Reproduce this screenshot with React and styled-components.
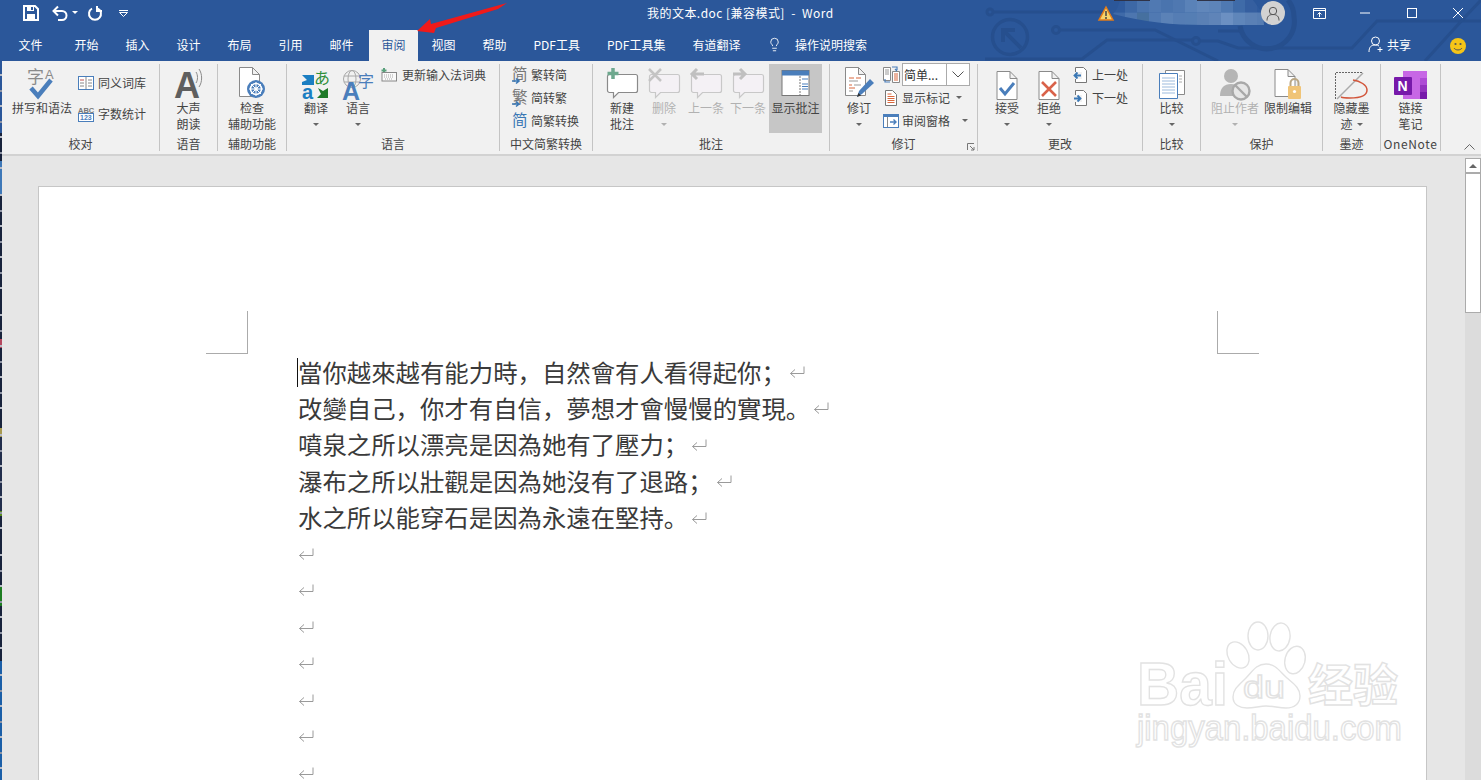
import React from 'react';
import styled, { createGlobalStyle } from 'styled-components';
import { Lightbulb } from 'lucide-react';

const cjk = '"Noto Sans CJK SC", "Liberation Sans", sans-serif';
const blue = '#2b579a';
const iconBlue = '#4a7ebb';

const GlobalStyle = createGlobalStyle`
    html, body {
        margin: 0;
        padding: 0;
        background: #e6e6e6;
    }
    body {
        font-family: ${cjk};
    }
    svg {
        overflow: visible;
    }
`;

const SWindow = styled.div`
    width: 1481px;
    height: 780px;
    display: flex;
    flex-direction: column;
    overflow: hidden;
`;

const SHeader = styled.div`
    position: relative;
    flex: none;
    height: 61px;
    background: ${blue};
    color: #fff;
    font-size: 12px;
`;

const SCircuit = styled.svg`
    position: absolute;
    right: 0;
    top: 0;
    overflow: hidden;
`;

const SArrow = styled.svg`
    position: absolute;
    left: 410px;
    top: 0;
    z-index: 3;
`;

const STitleBar = styled.div`
    position: relative;
    box-sizing: border-box;
    height: 30px;
    padding-bottom: 4px;
    display: flex;
    align-items: center;
`;

const SQuick = styled.div`
    display: flex;
    align-items: center;
    width: 647px;
    flex: none;
`;

const SQuickItem = styled.div`
    display: flex;
    margin-left: ${(p) => p.$ml}px;
`;

const STitle = styled.div`
    font-size: 12px;
    white-space: pre;
    letter-spacing: 0.46px;
    padding-bottom: 2px;
`;

const SStatus = styled.div`
    margin-left: auto;
    display: flex;
    align-items: center;
`;

const SWarning = styled.svg`
    margin-right: -1px;
`;

const SMosaic = styled.svg`
    margin: 0 -4px 2px 0;
`;

const SAvatar = styled.div`
    position: relative;
    width: 24px;
    height: 24px;
    border-radius: 50%;
    background: #d2d2d2;
    margin-right: 11px;
    display: flex;
    align-items: center;
    justify-content: center;
`;

const SWinBtn = styled.div`
    width: 46.25px;
    height: 26px;
    display: flex;
    align-items: center;
    justify-content: center;
`;

const STabs = styled.div`
    position: relative;
    height: 31px;
    display: flex;
    align-items: stretch;
`;

const STab = styled.div`
    box-sizing: border-box;
    display: flex;
    align-items: center;
    justify-content: center;
    padding-bottom: 3px;
    padding-left: ${(p) => (p.$w ? '0' : '13.5px')};
    padding-right: ${(p) => (p.$w ? '0' : '13.5px')};
    width: ${(p) => (p.$w ? `${p.$w}px` : 'auto')};
    white-space: nowrap;
    background: ${(p) => (p.$active ? '#f1f1f1' : 'transparent')};
    color: ${(p) => (p.$active ? blue : '#fff')};
    margin-left: ${(p) => (p.$active ? '2px' : '0')};
`;

const STellMe = styled.div`
    display: flex;
    align-items: center;
    margin-left: 13px;
    padding-bottom: 3px;
    gap: 13px;
`;

const SShare = styled.div`
    margin-left: auto;
    display: flex;
    align-items: center;
    gap: 3px;
    margin-right: 17px;
    padding-bottom: 2px;
`;

const SSmiley = styled.svg`
    margin: 0 15px 0 22px;
    align-self: center;
`;

const SMain = styled.div`
    flex: 1;
    min-height: 0;
    display: flex;
`;

const SStrip = styled.div`
    flex: none;
    width: 2px;
    background:
        repeating-linear-gradient(to bottom, transparent 0, transparent 13px, #b8bcc6 13px, #b8bcc6 15px, transparent 15px, transparent 29px, #8e94a4 29px, #8e94a4 31px),
        linear-gradient(
            to bottom,
            #2b579a 0, #2b579a 72px,
            #18233c 72px, #18233c 100px,
            #3e78b8 100px, #3e78b8 135px,
            #18233c 135px, #18233c 278px,
            #b5485f 278px, #b5485f 287px,
            #18233c 287px, #18233c 367px,
            #a89a50 367px, #a89a50 376px,
            #222e4c 376px, #222e4c 450px,
            #5a8c20 450px, #5a8c20 455px,
            #18233c 455px, #18233c 525px,
            #1e7d22 525px, #1e7d22 545px,
            #18233c 545px, #18233c 600px,
            #1b5fa8 600px
        );
    background-size: 100% 120px, 100% 100%;
    background-repeat: repeat-y, no-repeat;
`;

const SContent = styled.div`
    flex: 1;
    min-width: 0;
    display: flex;
    flex-direction: column;
`;

const SRibbon = styled.div`
    position: relative;
    flex: none;
    height: 95px;
    box-sizing: border-box;
    padding-top: 3px;
    background: #f1f1f1;
    border-bottom: 2px solid #d2d2d2;
    display: flex;
    align-items: flex-start;
    color: #444;
    font-size: 12px;
`;

const SGroup = styled.div`
    flex: none;
    box-sizing: border-box;
    width: ${(p) => p.$w}px;
    height: 87px;
    border-right: 1.5px solid #c4c4c4;
    display: flex;
    flex-direction: column;
`;

const SGroupBody = styled.div`
    height: 73px;
    display: flex;
    padding-left: ${(p) => p.$pl || 0}px;
    gap: ${(p) => p.$gap || 0}px;
    justify-content: ${(p) => (p.$center ? 'center' : 'flex-start')};
`;

const SGroupLabel = styled.div`
    text-align: center;
    line-height: 14px;
    white-space: nowrap;
    letter-spacing: ${(p) => p.$ls || 0}px;
`;

const SBig = styled.div`
    flex: none;
    width: ${(p) => p.$w}px;
    height: 69px;
    display: flex;
    flex-direction: column;
    align-items: center;
    background: ${(p) => (p.$active ? '#c6c6c6' : 'transparent')};
    color: ${(p) => (p.$off ? '#b1b1b1' : '#444')};
`;

const SBigIcon = styled.div`
    height: 36px;
    width: 100%;
    display: flex;
    justify-content: center;
    align-items: flex-end;
`;

const SBigLine = styled.div`
    height: 16px;
    line-height: 16px;
    white-space: nowrap;
    display: flex;
    align-items: center;
    gap: 4px;
`;

const SCaret = styled.span`
    display: inline-block;
    flex: none;
    width: 0;
    height: 0;
    border-left: 3.5px solid transparent;
    border-right: 3.5px solid transparent;
    border-top: 3.5px solid ${(p) => (p.$off ? '#b1b1b1' : '#666')};
`;

const SStack = styled.div`
    flex: none;
    display: flex;
    flex-direction: column;
    margin-top: -1px;
    margin-left: ${(p) => p.$ml || 0}px;
    padding-top: ${(p) => p.$pt || 0}px;
    gap: ${(p) => p.$gap || 0}px;
`;

const SSmall = styled.div`
    height: 23px;
    display: flex;
    align-items: center;
    gap: ${(p) => p.$gap ?? 3}px;
    white-space: nowrap;
`;

const SSmallCaret = styled.span`
    display: flex;
    margin-left: ${(p) => p.$ml}px;
`;

const SSelect = styled.div`
    box-sizing: border-box;
    width: 68px;
    height: 23px;
    background: #fff;
    border: 1px solid #ababab;
    display: flex;
    align-items: center;
    padding-left: 1px;
    color: #333;
`;

const SSelectValue = styled.div`
    flex: 1;
`;

const SSelectBtn = styled.div`
    width: 22px;
    height: 100%;
    border-left: 1px solid #ababab;
    display: flex;
    align-items: center;
    justify-content: center;
`;

const SLauncher = styled.svg`
    position: absolute;
    left: 965px;
    top: 82px;
`;

const SCollapse = styled.svg`
    position: absolute;
    right: 6px;
    top: 83px;
`;

const SWorkspace = styled.div`
    flex: 1;
    min-height: 0;
    display: flex;
    background: #e6e6e6;
`;

const SDocArea = styled.div`
    flex: 1;
    min-width: 0;
    box-sizing: border-box;
    padding: 30px 38px 0 36px;
    display: flex;
`;

const SPage = styled.div`
    position: relative;
    flex: 1;
    min-width: 0;
    box-sizing: border-box;
    background: #fff;
    border: 1px solid #c6c6c6;
    border-bottom: none;
    padding-top: 124px;
    overflow: hidden;
`;

const SMarks = styled.div`
    display: flex;
    justify-content: space-between;
    padding: 0 167px;
`;

const SCorner = styled.div`
    width: 41px;
    height: 42px;
    border-bottom: 1px solid #ababab;
    border-left: ${(p) => (p.$right ? '1px solid #ababab' : 'none')};
    border-right: ${(p) => (p.$right ? 'none' : '1px solid #ababab')};
`;

const SBody = styled.div`
    margin-top: -0.4px;
    padding-left: 259px;
    color: #3a3a3a;
    font-size: 24.4px;
    white-space: nowrap;
`;

const SParagraph = styled.div`
    position: relative;
    height: 36.45px;
    line-height: 36.45px;
    display: flex;
    align-items: center;
    gap: 3px;
`;

const SCursor = styled.span`
    position: absolute;
    left: -1px;
    top: 4px;
    width: 1px;
    height: 29px;
    background: #111;
`;

const SWatermark = styled.svg`
    position: absolute;
    left: 1098px;
    top: 436px;
`;

const SScrollbar = styled.div`
    flex: none;
    width: 16px;
    margin-top: 2px;
    display: flex;
    flex-direction: column;
    background: #dcdcdc;
`;

const SScrollBtn = styled.div`
    box-sizing: border-box;
    height: 15px;
    background: #fff;
    border: 1px solid #ababab;
    display: flex;
    align-items: center;
    justify-content: center;
`;

const SScrollUp = styled.span`
    width: 0;
    height: 0;
    border-left: 4px solid transparent;
    border-right: 4px solid transparent;
    border-bottom: 4px solid #666;
`;

const SThumb = styled.div`
    box-sizing: border-box;
    height: 140px;
    background: #fff;
    border: 1px solid #ababab;
`;

const Big = ({ w, icon, lines, caret, off, active }) => (
    <SBig $w={w} $off={off} $active={active}>
        <SBigIcon>{icon}</SBigIcon>
        {lines.map((line, i) => (
            <SBigLine key={i}>{line}</SBigLine>
        ))}
        {caret && (
            <SBigLine>
                <SCaret $off={off} />
            </SBigLine>
        )}
    </SBig>
);

const Doc = ({ x = 0.5, y = 0.5, w = 20, h = 28, fold = 7, stroke = '#8a8a8a' }) => (
    <path
        d={`M${x} ${y}h${w - fold}l${fold} ${fold}v${h - fold}h-${w}zM${x + w - fold} ${y}v${fold}h${fold}`}
        fill="#fff"
        stroke={stroke}
        strokeWidth="1"
    />
);

const Bubble = ({ off }) => (
    <path
        d="M3.5 6.5h26a2 2 0 0 1 2 2v14a2 2 0 0 1-2 2h-17l-5 5v-5h-4a2 2 0 0 1-2-2v-14a2 2 0 0 1 2-2z"
        fill={off ? '#f4f1f5' : '#fff'}
        stroke={off ? '#c8c8c8' : '#8a8a8a'}
        strokeWidth="1.2"
    />
);

const SpellIcon = () => (
    <svg width="30" height="34" viewBox="0 0 30 34">
        <text x="0" y="17" fontSize="17" fill="#8a8a8a">字</text>
        <text x="18" y="13" fontSize="13" fill="#8a8a8a" fontFamily="Liberation Sans">A</text>
        <path d="M4 22l7 8L24 14" fill="none" stroke={iconBlue} strokeWidth="4.5" />
    </svg>
);

const BookIcon = () => (
    <svg width="16" height="14" viewBox="0 0 16 14">
        <rect x="0.5" y="0.5" width="15" height="13" fill="#fff" stroke={iconBlue} />
        <path d="M8 1v12" stroke="#888" />
        <path d="M2 4h4" stroke="#c0504d" />
        <path d="M2 7h4M2 10h4M10 4h4M10 7h4M10 10h4" stroke="#888" />
    </svg>
);

const CountIcon = () => (
    <svg width="16" height="16" viewBox="0 0 16 16">
        <text x="0" y="6.5" fontSize="7.5" fontWeight="700" fill="#777" fontFamily="Liberation Sans">ABC</text>
        <rect x="0.5" y="7.5" width="15" height="8" fill="#fff" stroke={iconBlue} />
        <text x="2" y="14.3" fontSize="7" fontWeight="700" fill={iconBlue} fontFamily="Liberation Sans">123</text>
    </svg>
);

const ReadIcon = () => (
    <svg width="30" height="32" viewBox="0 0 30 32">
        <text x="0" y="30" fontSize="36" fontWeight="700" fill="#5f5f5f" fontFamily="Liberation Sans">A</text>
        <path d="M22 4c2 3 2 8 0 11M25 1c3.500 5 3.500 13 0 18" fill="none" stroke="#8a8a8a" />
    </svg>
);

const AccessIcon = () => (
    <svg width="30" height="33" viewBox="0 0 30 33">
        <Doc x={2.5} y={0.5} w={20} h={29} />
        <circle cx="19" cy="22" r="9" fill={iconBlue} />
        <circle cx="19" cy="22" r="5.5" fill="none" stroke="#fff" strokeWidth="1.5" />
        <path d="M19 15v14M12 22h14M14 17l10 10M24 17L14 27" stroke="#fff" />
        <circle cx="19" cy="22" r="1.8" fill="#fff" />
    </svg>
);

const TranslateIcon = () => (
    <svg width="28" height="30" viewBox="0 0 28 30">
        <path d="M0 5h12v10H0v-3l5-2-5-5z" fill="#1b7ec2" />
        <text x="12" y="14" fontSize="16" fill="#2f8f3a">あ</text>
        <text x="0" y="29" fontSize="20" fontWeight="700" fill="#1b7ec2" fontFamily="Liberation Sans">a</text>
        <path d="M15 28h11V18l-5 3-5-3 3 6z" fill="#1f7a28" />
    </svg>
);

const LanguageIcon = () => (
    <svg width="32" height="30" viewBox="0 0 32 30">
        <circle cx="10" cy="9" r="8.5" fill="none" stroke="#a8a8a8" />
        <ellipse cx="10" cy="9" rx="4" ry="8.5" fill="none" stroke="#a8a8a8" />
        <path d="M2 6h16M2 12h16" stroke="#a8a8a8" />
        <text x="16" y="17" fontSize="16" fill={iconBlue}>字</text>
        <text x="0" y="30" fontSize="25" fontWeight="700" fill={iconBlue} fontFamily="Liberation Sans">A</text>
    </svg>
);

const KeyboardIcon = () => (
    <svg width="16" height="14" viewBox="0 0 16 14">
        <path d="M3 0v5M0.500 2.500h5" stroke="#5aa07c" strokeWidth="2" />
        <rect x="1" y="4.5" width="14.5" height="8.5" fill="#fafafa" stroke="#888" />
        <path d="M3 7h10M3 9h10M4 11h8" stroke="#aaa" strokeDasharray="1 1" />
    </svg>
);

const ConvertIcon = ({ glyph, color = '#777', arrow = true }) => (
    <svg width="16" height="18" viewBox="0 0 16 18">
        <text x="0" y="14" fontSize="15.5" fill={color}>{glyph}</text>
        {arrow && <path d="M0 15h6M4 12.500l3 2.500-3 2.500" fill="none" stroke="#3b78b5" strokeWidth="1.6" />}
    </svg>
);

const NewCommentIcon = () => (
    <svg width="32" height="32" viewBox="0 0 32 32">
        <Bubble />
        <path d="M7 0v11M1.500 5.500h11" stroke="#6ea88e" strokeWidth="3.5" />
    </svg>
);

const DeleteCommentIcon = () => (
    <svg width="32" height="32" viewBox="0 0 32 32">
        <Bubble off />
        <path d="M1 1l12 12M13 1L1 13" stroke="#c4c4c4" strokeWidth="2.5" />
    </svg>
);

const PrevCommentIcon = () => (
    <svg width="32" height="32" viewBox="0 0 32 32">
        <Bubble off />
        <path d="M14 6H3M7 1L2 6l5 5" fill="none" stroke="#c0c0c0" strokeWidth="3" />
    </svg>
);

const NextCommentIcon = () => (
    <svg width="32" height="32" viewBox="0 0 32 32">
        <Bubble off />
        <path d="M1 6h11M8 1l5 5-5 5" fill="none" stroke="#c0c0c0" strokeWidth="3" />
    </svg>
);

const ShowCommentsIcon = () => (
    <svg width="30" height="30" viewBox="0 0 30 30">
        <rect x="1" y="0.5" width="27" height="25" fill="#fff" stroke="#777" />
        <rect x="1" y="0.5" width="27" height="5" fill={iconBlue} />
        <path d="M19 6v19" stroke="#777" strokeDasharray="2 1" />
        <path d="M21 9h6M21 14h6M21 16.500h6M21 19h6" stroke={iconBlue} strokeWidth="1.2" />
    </svg>
);

const TrackIcon = () => (
    <svg width="30" height="33" viewBox="0 0 30 33">
        <Doc x={1.5} y={0.5} w={20} h={28} />
        <path d="M5 11h5M12 11h5M5 18h3M5 21h6" stroke="#d9673c" />
        <path d="M5 14h9M10 18h7M5 24h4" stroke="#999" />
        <path d="M13 30l2-6L26 12l4 4-12 11z" fill={iconBlue} />
        <path d="M13 30l1.400-4 2.600 2.400z" fill="#333" />
    </svg>
);

const SmallCompareIcon = () => (
    <svg width="17" height="17" viewBox="0 0 17 17">
        <path d="M0.500 1.500h7v13h-7z" fill="#fff" stroke="#888" />
        <path d="M9.500 5.500h7v11h-7z" fill="#fff" stroke="#888" />
        <path d="M11 8h4M11 10h4M11 12h4M11 14h4" stroke="#d9673c" />
        <path d="M2 4h4M2 6h4M2 8h4" stroke="#999" />
        <path d="M9 1h5v3M12 3l2 2" fill="none" stroke={iconBlue} strokeWidth="1.2" />
        <path d="M7 16H2v-3" fill="none" stroke={iconBlue} strokeWidth="1.2" />
    </svg>
);

const MarkupIcon = () => (
    <svg width="16" height="16" viewBox="0 0 16 16">
        <path d="M2.500 0.500h7l4 4v11h-11z" fill="#fff" stroke="#777" />
        <path d="M4.500 4h4M4.500 6.500h7M4.500 8.500h7M4.500 10.500h7M4.500 12.500h7" stroke="#d9673c" />
    </svg>
);

const PaneIcon = () => (
    <svg width="16" height="14" viewBox="0 0 16 14">
        <rect x="0.5" y="0.5" width="15" height="13" fill="#fff" stroke={iconBlue} />
        <rect x="0" y="0" width="16" height="3" fill={iconBlue} />
        <path d="M4.500 3v10" stroke="#888" />
        <path d="M7 8h6M10.500 5.500L13 8l-2.500 2.500" fill="none" stroke={iconBlue} strokeWidth="1.4" />
    </svg>
);

const AcceptIcon = () => (
    <svg width="22" height="29" viewBox="0 0 22 29">
        <Doc x={1} y={0.5} w={20} h={28} />
        <path d="M4 17l5 6 9-11" fill="none" stroke={iconBlue} strokeWidth="3" />
    </svg>
);

const RejectIcon = () => (
    <svg width="22" height="29" viewBox="0 0 22 29">
        <Doc x={1} y={0.5} w={20} h={28} />
        <path d="M4 11l14 14M18 11L4 25" stroke="#d9624a" strokeWidth="2.6" />
    </svg>
);

const ChangeIcon = ({ next }) => (
    <svg width="16" height="16" viewBox="0 0 16 16">
        <path d="M2.500 0.500h8l3 3v12h-11z" fill="#fff" stroke="#777" />
        <rect x="0" y="5" width="9" height="7" fill="#f1f1f1" />
        {next ? (
            <path d="M1 8.500h6M4.500 5.500l3 3-3 3" fill="none" stroke="#3b78b5" strokeWidth="1.8" />
        ) : (
            <path d="M8 8.500H2M4.500 5.500l-3 3 3 3" fill="none" stroke="#3b78b5" strokeWidth="1.8" />
        )}
    </svg>
);

const CompareIcon = () => (
    <svg width="26" height="30" viewBox="0 0 26 30">
        <path d="M6.500 0.500h19v24h-19z" fill="#fff" stroke="#8a8a8a" />
        <path d="M0.500 3.500h18v25h-18z" fill="#fff" stroke={iconBlue} />
        <path d="M3 8h13M3 11h13M3 14h13M3 17h13M3 20h13M3 23h13" stroke="#9dbbdd" />
        <path d="M20 6h3M20 9h3M20 12h3" stroke="#aaa" />
    </svg>
);

const BlockIcon = () => (
    <svg width="32" height="32" viewBox="0 0 32 32">
        <circle cx="12" cy="8" r="7" fill="#b5b5b5" />
        <path d="M1 28c0-8 4-12 11-12s11 4 11 12z" fill="#b5b5b5" />
        <circle cx="22" cy="23" r="8.5" fill="#e6e6e6" stroke="#a8a8a8" strokeWidth="2.4" />
        <path d="M16 17l12 12" stroke="#a8a8a8" strokeWidth="2.4" />
    </svg>
);

const RestrictIcon = () => (
    <svg width="28" height="31" viewBox="0 0 28 31">
        <Doc x={1} y={0.5} w={20} h={27} />
        <rect x="14" y="17" width="13" height="13" rx="1" fill="#f0c477" />
        <path d="M16.500 17v-3a4 4 0 0 1 8 0v3" fill="none" stroke="#b9a684" strokeWidth="2" />
        <circle cx="20.5" cy="22.5" r="1.6" fill="#fff" />
    </svg>
);

const InkIcon = () => (
    <svg width="33" height="28" viewBox="0 0 33 28">
        <path d="M0.500 27V0.500H28" fill="none" stroke="#666" strokeDasharray="2 1" />
        <path d="M2 27L28 1" stroke="#aaa" strokeWidth="1.4" />
        <path d="M18 8c7 1 14 5 14 10 0 6-8 8-17 8-3 0-7 0-9-1" fill="none" stroke="#d2553a" strokeWidth="1.5" />
    </svg>
);

const OneNoteIcon = () => (
    <svg width="33" height="30" viewBox="0 0 33 30">
        <rect x="9" y="1" width="24" height="28" fill="#c767e5" />
        <rect x="26" y="8" width="7" height="7" fill="#ae4bd5" />
        <rect x="26" y="15" width="7" height="7" fill="#9332bf" />
        <rect x="26" y="22" width="7" height="7" fill="#7719aa" />
        <rect x="0" y="7" width="18" height="18" rx="1" fill="#7719aa" />
        <text x="3.5" y="21" fontSize="14" fontWeight="700" fill="#fff" fontFamily="Liberation Sans">N</text>
    </svg>
);

const ReturnMark = () => (
    <svg width="16" height="12" viewBox="0 0 16 12">
        <path d="M15 0.500v7H1.500M6 3.500L1.500 7.500 6 11.500" fill="none" stroke="#9a9a9a" />
    </svg>
);

const mosaicRows = [
    ['#2f5b9e', '#3d68a6', '#4a74ae', '#5079b2', '#4a74ae', '#4f78b1', '#5a82b8', '#6187bb', '#5d84b9', '#4f79b2', '#3f6ba8', '#355fa0', '#2f5b9e'],
    ['#3f6aa8', '#4d76af', '#46709f', '#5079b2', '#5b82b7', '#557db4', '#557eb4', '#5a80b5', '#5f84b8', '#6c90c2', '#5f86ba', '#5a80b5', '#567db3'],
];

const Mosaic = () => (
    <SMosaic width="152" height="25" viewBox="0 0 152 25">
        <defs>
            <clipPath id="nameBlur">
                <path d="M0 14C8 6 4 0 10 0h130l10 14 1 11H90C60 25 30 22 0 14z" />
            </clipPath>
        </defs>
        <g clipPath="url(#nameBlur)">
            {mosaicRows.map((row, r) =>
                row.map((c, i) => <rect key={`${r}-${i}`} x={i * 12} y={r * 12.5} width="12.2" height="12.7" fill={c} />)
            )}
        </g>
        <path d="M1 0.500h36M84 0.500h38" stroke="#2f3348" />
    </SMosaic>
);

const lines = [
    '當你越來越有能力時，自然會有人看得起你；',
    '改變自己，你才有自信，夢想才會慢慢的實現。',
    '噴泉之所以漂亮是因為她有了壓力；',
    '瀑布之所以壯觀是因為她沒有了退路；',
    '水之所以能穿石是因為永遠在堅持。',
    '', '', '', '', '', '', '',
];

const tabs = ['开始', '插入', '设计', '布局', '引用', '邮件'];

const App = () => (
    <SWindow>
        <GlobalStyle />
        <SHeader>
            <SCircuit width="496" height="61" viewBox="985 0 496 61" fill="none" stroke="#264f8e" strokeWidth="3">
                <circle cx="990" cy="12" r="3" />
                <path d="M993 12h112" />
                <circle cx="1010" cy="37" r="17.5" strokeWidth="3.5" />
                <path d="M1021 48L1004 31M1003 42V30h12" strokeWidth="4" />
                <circle cx="1056" cy="30" r="3.5" />
                <path d="M1060 30h95l63 31" />
                <path d="M985 59h97l25-19h85M1200 41h18l20 7h114l25-27h104" />
                <circle cx="1196" cy="41" r="3.5" />
                <path d="M1425 61l40-44 16-17" />
                <path d="M1218 31h22" />
                <path d="M1240 26a27 27 0 1 0 54-9c0-6-2-12-6-17" strokeWidth="5" />
            </SCircuit>
            <STitleBar>
                <SQuick>
                    <SQuickItem $ml={23}>
                        <svg width="16" height="16" viewBox="0 0 16 16">
                            <path d="M1 1h11l3 3v11H1z" fill="none" stroke="#fff" strokeWidth="2" />
                            <path d="M4 1h7v5H4zM4 9h8v6H4z" fill="#fff" />
                            <rect x="8" y="2" width="2" height="3" fill={blue} />
                        </svg>
                    </SQuickItem>
                    <SQuickItem $ml={13}>
                        <svg width="16" height="16" viewBox="0 0 16 16">
                            <path d="M2 6h8a4.500 4.500 0 0 1 0 9H6" fill="none" stroke="#fff" strokeWidth="2" />
                            <path d="M6 1.500L1.500 6 6 10.500" fill="none" stroke="#fff" strokeWidth="2" />
                        </svg>
                    </SQuickItem>
                    <SQuickItem $ml={4}>
                        <svg width="6" height="4" viewBox="0 0 6 4"><path d="M0 0h6L3 3z" fill="#fff" /></svg>
                    </SQuickItem>
                    <SQuickItem $ml={10}>
                        <svg width="15" height="15" viewBox="0 0 15 15">
                            <path d="M4 2.500a6 6 0 1 0 6 0M9 0v5h5" fill="none" stroke="#fff" strokeWidth="2" />
                        </svg>
                    </SQuickItem>
                    <SQuickItem $ml={16}>
                        <svg width="9" height="7" viewBox="0 0 9 7">
                            <path d="M0 0.500h9M0.500 2.500h8L4.500 6.500z" fill="none" stroke="#fff" />
                        </svg>
                    </SQuickItem>
                </SQuick>
                <STitle>{'我的文本.doc [兼容模式]  -  Word'}</STitle>
                <SStatus>
                    <SWarning width="16" height="15" viewBox="0 0 16 15">
                        <path d="M8 1l7 13H1z" fill="#f6d36b" stroke="#e07b1a" strokeWidth="1.5" />
                        <path d="M8 5v5M8 11v2" stroke="#444" strokeWidth="1.5" />
                    </SWarning>
                    <Mosaic />
                    <SAvatar>
                        <svg width="14" height="15" viewBox="0 0 14 15">
                            <circle cx="7" cy="5" r="3.7" fill="none" stroke="#555" />
                            <path d="M1 14.500c0-4 2-6 6-6s6 2 6 6" fill="none" stroke="#555" />
                        </svg>
                    </SAvatar>
                    <SWinBtn>
                        <svg width="13" height="11" viewBox="0 0 13 11">
                            <path d="M0.500 0.500h12v10H0.500zM0.500 2.500h12" fill="none" stroke="#fff" />
                            <path d="M6.500 9V4.500M4.500 6.500l2-2 2 2" fill="none" stroke="#fff" />
                        </svg>
                    </SWinBtn>
                    <SWinBtn>
                        <svg width="10" height="2" viewBox="0 0 10 2"><path d="M0 1h10" stroke="#fff" /></svg>
                    </SWinBtn>
                    <SWinBtn>
                        <svg width="10" height="10" viewBox="0 0 10 10"><rect x="0.5" y="0.5" width="9" height="9" fill="none" stroke="#fff" /></svg>
                    </SWinBtn>
                    <SWinBtn>
                        <svg width="10" height="10" viewBox="0 0 10 10"><path d="M0 0l10 10M10 0L0 10" stroke="#fff" /></svg>
                    </SWinBtn>
                </SStatus>
            </STitleBar>
            <STabs>
                <STab $w={61}>文件</STab>
                {tabs.map((t) => (
                    <STab key={t} $w={51}>{t}</STab>
                ))}
                <STab $w={49} $active>审阅</STab>
                <STab $w={51}>视图</STab>
                <STab $w={51}>帮助</STab>
                <STab>PDF工具</STab>
                <STab>PDF工具集</STab>
                <STab>有道翻译</STab>
                <STellMe>
                    <Lightbulb size={15} color="#fff" strokeWidth={1.4} />
                    操作说明搜索
                </STellMe>
                <SShare>
                    <svg width="16" height="17" viewBox="0 0 16 17">
                        <circle cx="7.5" cy="5" r="4" fill="none" stroke="#fff" />
                        <path d="M1 16c0-5 2-7 6.500-7 1.500 0 2.500.3 3.500 1" fill="none" stroke="#fff" />
                        <path d="M12 11v5M9.500 13.500h5" stroke="#fff" />
                    </svg>
                    共享
                </SShare>
                <SSmiley width="16" height="16" viewBox="0 0 16 16">
                    <circle cx="8" cy="8" r="8" fill="#f5c518" />
                    <circle cx="5.5" cy="6" r="1.1" fill="#555" />
                    <circle cx="10.5" cy="6" r="1.1" fill="#555" />
                    <path d="M4 10c1.500 2.600 6.500 2.600 8 0" fill="none" stroke="#555" />
                </SSmiley>
            </STabs>
            <SArrow width="100" height="38" viewBox="410 0 100 38">
                <path d="M417 31l13-12 1 5 76-21-9 6-62 19 -2 5z" fill="#f01a1a" />
            </SArrow>
        </SHeader>
        <SMain>
            <SStrip />
            <SContent>
                <SRibbon>
                    <SGroup $w={158}>
                        <SGroupBody $pl={9}>
                            <Big w={62} icon={<SpellIcon />} lines={['拼写和语法']} />
                            <SStack $ml={5} $pt={8} $gap={8}>
                                <SSmall $gap={4}><BookIcon />同义词库</SSmall>
                                <SSmall $gap={4}><CountIcon />字数统计</SSmall>
                            </SStack>
                        </SGroupBody>
                        <SGroupLabel>校对</SGroupLabel>
                    </SGroup>
                    <SGroup $w={58}>
                        <SGroupBody $center>
                            <Big w={50} icon={<ReadIcon />} lines={['大声', '朗读']} />
                        </SGroupBody>
                        <SGroupLabel>语音</SGroupLabel>
                    </SGroup>
                    <SGroup $w={69}>
                        <SGroupBody $center>
                            <Big w={60} icon={<AccessIcon />} lines={['检查', '辅助功能']} />
                        </SGroupBody>
                        <SGroupLabel>辅助功能</SGroupLabel>
                    </SGroup>
                    <SGroup $w={213}>
                        <SGroupBody $pl={9}>
                            <Big w={40} icon={<TranslateIcon />} lines={['翻译']} caret />
                            <Big w={44} icon={<LanguageIcon />} lines={['语言']} caret />
                            <SStack $ml={1}>
                                <SSmall $gap={5}><KeyboardIcon />更新输入法词典</SSmall>
                            </SStack>
                        </SGroupBody>
                        <SGroupLabel>语言</SGroupLabel>
                    </SGroup>
                    <SGroup $w={93}>
                        <SGroupBody $pl={12}>
                            <SStack>
                                <SSmall><ConvertIcon glyph="简" />繁转简</SSmall>
                                <SSmall><ConvertIcon glyph="繁" />简转繁</SSmall>
                                <SSmall><ConvertIcon glyph="简" color="#3b78b5" arrow={false} />简繁转换</SSmall>
                            </SStack>
                        </SGroupBody>
                        <SGroupLabel>中文简繁转换</SGroupLabel>
                    </SGroup>
                    <SGroup $w={237}>
                        <SGroupBody $pl={8}>
                            <Big w={42} icon={<NewCommentIcon />} lines={['新建', '批注']} />
                            <Big w={42} off icon={<DeleteCommentIcon />} lines={['删除']} caret />
                            <Big w={42} off icon={<PrevCommentIcon />} lines={['上一条']} />
                            <Big w={42} off icon={<NextCommentIcon />} lines={['下一条']} />
                            <Big w={53} active icon={<ShowCommentsIcon />} lines={['显示批注']} />
                        </SGroupBody>
                        <SGroupLabel>批注</SGroupLabel>
                    </SGroup>
                    <SGroup $w={148}>
                        <SGroupBody $pl={8}>
                            <Big w={42} icon={<TrackIcon />} lines={['修订']} caret />
                            <SStack $ml={3}>
                                <SSmall $gap={2}>
                                    <SmallCompareIcon />
                                    <SSelect>
                                        <SSelectValue>简单...</SSelectValue>
                                        <SSelectBtn>
                                            <svg width="12" height="7" viewBox="0 0 12 7"><path d="M0.500 0.500L6 6l5.500-5.500" fill="none" stroke="#555" /></svg>
                                        </SSelectBtn>
                                    </SSelect>
                                </SSmall>
                                <SSmall><MarkupIcon />显示标记<SSmallCaret $ml={3}><SCaret /></SSmallCaret></SSmall>
                                <SSmall><PaneIcon />审阅窗格<SSmallCaret $ml={9}><SCaret /></SSmallCaret></SSmall>
                            </SStack>
                        </SGroupBody>
                        <SGroupLabel>修订</SGroupLabel>
                    </SGroup>
                    <SGroup $w={165}>
                        <SGroupBody $pl={8}>
                            <Big w={42} icon={<AcceptIcon />} lines={['接受']} caret />
                            <Big w={42} icon={<RejectIcon />} lines={['拒绝']} caret />
                            <SStack $ml={3}>
                                <SSmall><ChangeIcon />上一处</SSmall>
                                <SSmall><ChangeIcon next />下一处</SSmall>
                            </SStack>
                        </SGroupBody>
                        <SGroupLabel>更改</SGroupLabel>
                    </SGroup>
                    <SGroup $w={58}>
                        <SGroupBody $center>
                            <Big w={50} icon={<CompareIcon />} lines={['比较']} caret />
                        </SGroupBody>
                        <SGroupLabel>比较</SGroupLabel>
                    </SGroup>
                    <SGroup $w={122}>
                        <SGroupBody $pl={9} $gap={3}>
                            <Big w={50} off icon={<BlockIcon />} lines={['阻止作者']} caret />
                            <Big w={50} icon={<RestrictIcon />} lines={['限制编辑']} />
                        </SGroupBody>
                        <SGroupLabel>保护</SGroupLabel>
                    </SGroup>
                    <SGroup $w={58}>
                        <SGroupBody $center>
                            <Big w={50} icon={<InkIcon />} lines={['隐藏墨', <React.Fragment key="ink">迹<SCaret /></React.Fragment>]} />
                        </SGroupBody>
                        <SGroupLabel>墨迹</SGroupLabel>
                    </SGroup>
                    <SGroup $w={60}>
                        <SGroupBody $center>
                            <Big w={50} icon={<OneNoteIcon />} lines={['链接', '笔记']} />
                        </SGroupBody>
                        <SGroupLabel $ls={0.6}>OneNote</SGroupLabel>
                    </SGroup>
                    <SLauncher width="8" height="8" viewBox="0 0 8 8">
                        <path d="M0.500 7V0.500H7M3 3l4 4M7 4v3H4" fill="none" stroke="#777" />
                    </SLauncher>
                    <SCollapse width="11" height="6" viewBox="0 0 11 6">
                        <path d="M0.500 5.500l5-5 5 5" fill="none" stroke="#666" />
                    </SCollapse>
                </SRibbon>
                <SWorkspace>
                    <SDocArea>
                        <SPage>
                            <SMarks>
                                <SCorner />
                                <SCorner $right />
                            </SMarks>
                            <SBody>
                                {lines.map((text, i) => (
                                    <SParagraph key={i}>
                                        {i === 0 && <SCursor />}
                                        {text && <span>{text}</span>}
                                        <ReturnMark />
                                    </SParagraph>
                                ))}
                            </SBody>
                            <SWatermark width="270" height="130" viewBox="0 0 270 130" fill="#fff" stroke="#e2e2e2" strokeWidth="1.4">
                                <text x="0" y="82" fontSize="62" fontWeight="700" fontFamily="Liberation Sans" textLength="91" lengthAdjust="spacingAndGlyphs">Bai</text>
                                <ellipse cx="101" cy="32" rx="10" ry="14" transform="rotate(-30 101 32)" />
                                <ellipse cx="121" cy="13" rx="10" ry="14" />
                                <ellipse cx="143" cy="14" rx="10" ry="14" transform="rotate(8 143 14)" />
                                <ellipse cx="158" cy="37" rx="10" ry="14" transform="rotate(15 158 37)" />
                                <path d="M129 41c-10 0-14 8-20 14-7 7-13 11-13 19 0 8 7 11 14 11 7 0 13-2 19-2 7 0 13 2 20 2 8 0 14-4 14-12 0-8-6-12-13-18-7-6-11-14-21-14z" />
                                <text x="106" y="75" fontSize="32" fontFamily="Liberation Sans" textLength="42" lengthAdjust="spacingAndGlyphs">du</text>
                                <text x="171" y="79" fontSize="45" fontWeight="700">经验</text>
                                <text x="0" y="117" fontSize="35" fontFamily="Liberation Sans" textLength="265" lengthAdjust="spacingAndGlyphs">jingyan.baidu.com</text>
                            </SWatermark>
                        </SPage>
                    </SDocArea>
                    <SScrollbar>
                        <SScrollBtn><SScrollUp /></SScrollBtn>
                        <SThumb />
                    </SScrollbar>
                </SWorkspace>
            </SContent>
        </SMain>
    </SWindow>
);

export default App;
